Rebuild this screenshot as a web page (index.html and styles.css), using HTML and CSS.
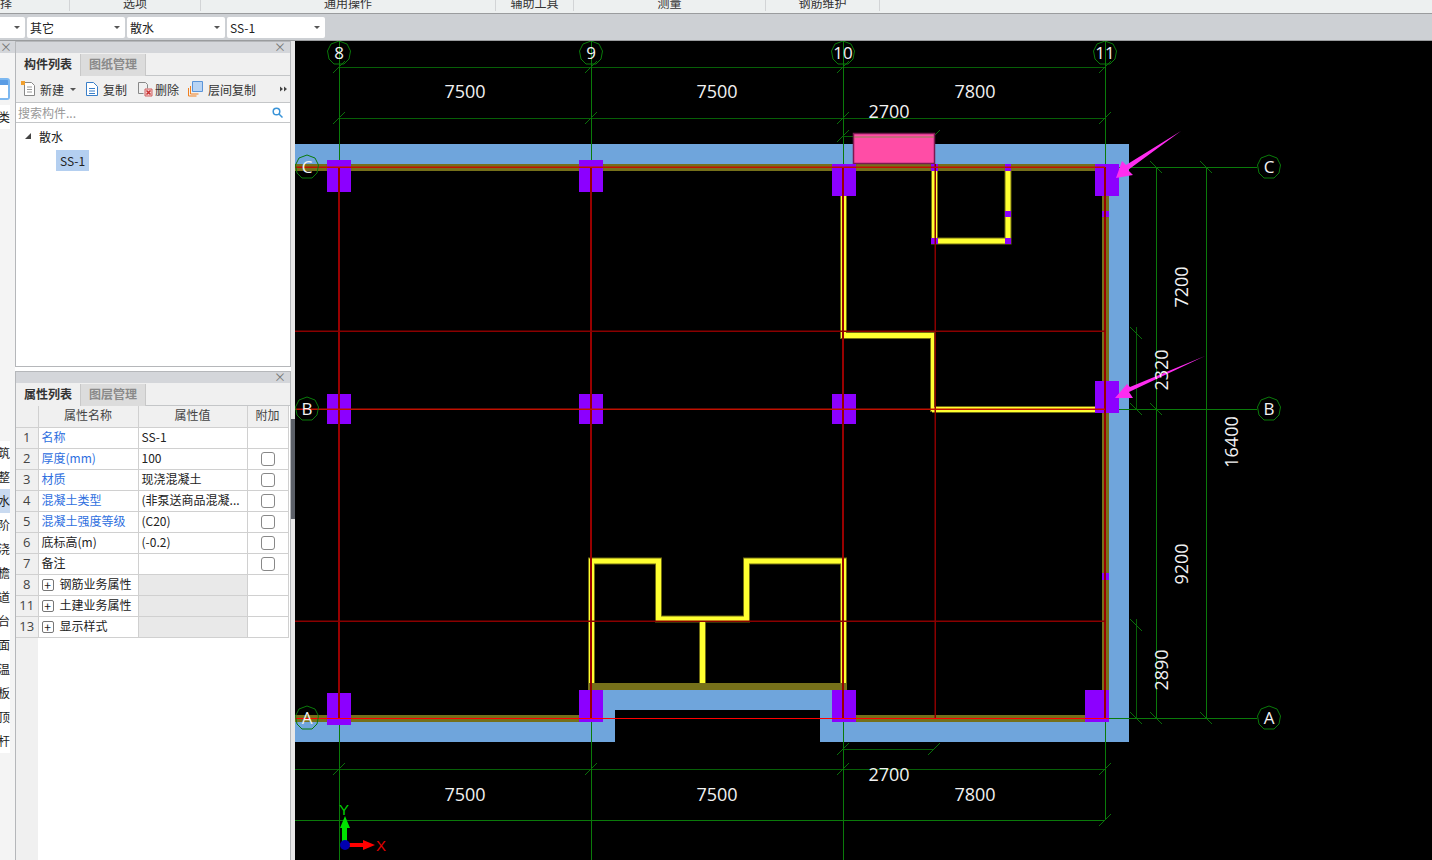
FILE: index.html
```html
<!DOCTYPE html>
<html lang="zh-CN">
<head>
    <meta charset="UTF-8">
    <title>散水</title>
    <link rel="stylesheet" href="styles.css">
</head>
<body>
    <div class="ribbon">
        <div class="rb_group rb_w70">择</div>
        <div class="rb_group rb_w131">选项</div>
        <div class="rb_group rb_w294">通用操作</div>
        <div class="rb_group rb_w78">辅助工具</div>
        <div class="rb_group rb_w192">测量</div>
        <div class="rb_group rb_w114">钢筋维护</div>
    </div>
    <div class="toolbar">
        <div class="combo combo_first"><span></span><i></i></div>
        <div class="combo"><span>其它</span><i></i></div>
        <div class="combo"><span>散水</span><i></i></div>
        <div class="combo"><span>SS-1</span><i></i></div>
    </div>

    <div class="main">
        <div class="nav">
            <div class="nav_top">×</div>
            <div class="nav_icon"></div>
            <div class="nav_item nav_first">类</div>
            <div class="nav_list">
                <div class="nav_item">建筑</div>
                <div class="nav_item">平整</div>
                <div class="nav_item nav_on">散水</div>
                <div class="nav_item">台阶</div>
                <div class="nav_item">后浇</div>
                <div class="nav_item">挑檐</div>
                <div class="nav_item">通道</div>
                <div class="nav_item">阳台</div>
                <div class="nav_item">屋面</div>
                <div class="nav_item">保温</div>
                <div class="nav_item">栏板</div>
                <div class="nav_item">压顶</div>
                <div class="nav_item">栏杆</div>
            </div>
        </div>

        <div class="side">
            <section class="panel panel_list">
                <div class="panel_title">×</div>
                <div class="tabs">
                    <div class="tab tab_on">构件列表</div>
                    <div class="tab">图纸管理</div>
                </div>
                <div class="actions">
                    <div class="act act_new">
                        <svg width="16" height="16" viewBox="0 0 16 16"><path class="ic_page" d="M3.500 1.500h7l3 3v10h-10z"/><path class="ic_line" d="M6 6h5M6 8.500h5M6 11h5"/><path class="ic_star" d="M0 0h4v4h-4z"/></svg>
                        <span>新建</span><i class="act_drop"></i>
                    </div>
                    <div class="act act_copy">
                        <svg width="14" height="16" viewBox="0 0 14 16"><path class="ic_blue" d="M1.500 1.500h7l4 4v9h-11z"/><path class="ic_blue" d="M4 7.500h6M4 10h6M4 12.500h6"/></svg>
                        <span>复制</span>
                    </div>
                    <div class="act act_del">
                        <svg width="16" height="16" viewBox="0 0 16 16"><path class="ic_grey" d="M1.500 1.500h7l2 2v4M1.500 1.500v11h5"/><path class="ic_del" d="M8 8h7v7h-7z"/><path class="ic_x" d="M9.500 9.500l4 4M13.500 9.500l-4 4"/></svg>
                        <span>删除</span>
                    </div>
                    <div class="act act_floor">
                        <svg width="15" height="16" viewBox="0 0 15 16"><path class="ic_orange" d="M.5 7v8h8M2.500 5v8h8"/><path class="ic_sheet" d="M4.500 .5h10v10h-10z"/></svg>
                        <span>层间复制</span>
                    </div>
                    <div class="act_more">
                        <svg width="7" height="7" viewBox="0 0 7 7"><path class="ic_more" d="M0 .5l3 2.500-3 2.500zM4 .5l3 2.500-3 2.500z"/></svg>
                    </div>
                </div>
                <div class="search">
                    <span>搜索构件...</span>
                    <svg width="11" height="11" viewBox="0 0 11 11"><circle class="ic_search" cx="4.500" cy="4.500" r="3.300"/><path class="ic_search" d="M7 7l3.500 3.500"/></svg>
                </div>
                <div class="tree">
                    <div class="tree_row"><i class="tree_arrow"></i><span>散水</span></div>
                    <div class="tree_leaf"><span>SS-1</span></div>
                </div>
            </section>

            <section class="panel panel_attr">
                <div class="panel_title">×</div>
                <div class="tabs">
                    <div class="tab tab_on">属性列表</div>
                    <div class="tab">图层管理</div>
                </div>
                <div class="attr_body">
                    <table class="attr">
                        <tr class="attr_head"><th class="col_no"></th><th class="col_name">属性名称</th><th class="col_val">属性值</th><th class="col_add">附加</th></tr>
                        <tr><td class="no">1</td><td class="blue">名称</td><td>SS-1</td><td></td></tr>
                        <tr><td class="no">2</td><td class="blue">厚度(mm)</td><td>100</td><td class="chk"><b></b></td></tr>
                        <tr><td class="no">3</td><td class="blue">材质</td><td>现浇混凝土</td><td class="chk"><b></b></td></tr>
                        <tr><td class="no">4</td><td class="blue">混凝土类型</td><td>(非泵送商品混凝...</td><td class="chk"><b></b></td></tr>
                        <tr><td class="no">5</td><td class="blue">混凝土强度等级</td><td>(C20)</td><td class="chk"><b></b></td></tr>
                        <tr><td class="no">6</td><td>底标高(m)</td><td>(-0.2)</td><td class="chk"><b></b></td></tr>
                        <tr><td class="no">7</td><td>备注</td><td></td><td class="chk"><b></b></td></tr>
                        <tr><td class="no">8</td><td class="grp"><em>+</em>钢筋业务属性</td><td class="grey"></td><td></td></tr>
                        <tr><td class="no">11</td><td class="grp"><em>+</em>土建业务属性</td><td class="grey"></td><td></td></tr>
                        <tr><td class="no">13</td><td class="grp"><em>+</em>显示样式</td><td class="grey"></td><td></td></tr>
                    </table>
                    <div class="attr_rest"></div>
                </div>
            </section>
        </div>

        <div class="splitter"><div class="split_thumb"></div></div>

        <svg class="cad" width="1137" height="819" viewBox="295 41 1137 819">
            <defs>
                <polygon id="axis_mark" class="axis_mark" points="0,-12 8,-9 11.500,-2 10,6 5,11 -5,11 -10,6 -11.500,-2 -8,-9"/>
            </defs>

            <!-- slab -->
            <path class="slab" d="M295 144H1129V742H820V710H832V722H1109V164H295Z"/>
            <path class="slab" d="M295 718H603V690H832V710H615V742H295Z"/>

            <!-- walls -->
            <path class="wall" d="M295 164H1109V171H295ZM1102 171H1109V722H1102ZM295 715H579V722H295ZM855 715H1102V722H855ZM588 683H847V690H588Z"/>

            <!-- axis lines -->
            <path class="grid_dim" d="M339 118.500H1105M295 769.500H1105M339 67.500H1105"/>
            <path class="grid_hi" d="M339.500 41V860M591.500 41V860M843.500 41V860M1105.500 41V820M295 820.500H1105M1105 167.500H1257M1105 409.500H1257M1105 718.500H1257M1156.500 167V718M1206.500 167V718"/>
            <path class="grid_dim" d="M843 136.500H934M843 749.500H934M1136.500 327V409M1136.500 619V718"/>
            <path class="ticks" d="M333 73l12-12M585 73l12-12M837 73l12-12M1099 73l12-12M333 124l12-12M585 124l12-12M837 124l12-12M1099 124l12-12M837 142l12-12M928 142l12-12M837 755l12-12M928 755l12-12M333 775l12-12M585 775l12-12M837 775l12-12M1099 775l12-12M1099 826l12-12M1150 161l12 12M1200 161l12 12M1130 327l12 12M1130 403l12 12M1150 403l12 12M1130 619l12 12M1130 712l12 12M1150 712l12 12M1200 712l12 12"/>

            <!-- yellow walls -->
            <path class="yl_edge" d="M843.500 196V335.500H934M932 409.500H1095M934.500 171V241H1008V171"/>
            <path class="yl_edge" d="M591.500 683V561H658.500V619H746.500V561H843.500V683M702.500 619V683"/>
            <path class="yl_thin_edge" d="M932.500 332V412"/>
            <path class="yl_fill" d="M843.500 196V335.500H934M932 409.500H1095M934.500 171V241H1008V171"/>
            <path class="yl_fill" d="M591.500 683V561H658.500V619H746.500V561H843.500V683M702.500 619V683"/>
            <path class="yl_thin" d="M932.500 333V411"/>

            <!-- opening -->
            <rect class="pink" x="853.500" y="133.500" width="81" height="30"/>
            <path class="pink_line" d="M854 137H934"/>

            <!-- columns -->
            <path class="col" d="M327 160h24v32h-24zM579 160h24v32h-24zM832 164h24v32h-24zM1095 164h24v32h-24zM327 394h24v30h-24zM579 394h24v30h-24zM832 394h24v30h-24zM1095 381h24v32h-24zM327 693h24v32h-24zM579 690h24v32h-24zM832 690h24v32h-24zM1085 690h24v32h-24z"/>
            <path class="col" d="M931 164h7v7h-7zM1005 164h6v7h-6zM1005 211h6v6h-6zM1005 238h6v6h-6zM931 238h7v6h-7zM1102 211h7v6h-7zM1102 573h7v7h-7z"/>

            <!-- red lines -->
            <path class="red_axis" d="M339 167V718M591 167V718M843 167V718M1105 167V718"/>
            <path class="red_dim" d="M295 331.250H1105M295 621.250H1105M935.250 164V718"/>
            <path class="red_wall" d="M295 167.250H1105M295 409.250H1105"/>
            <path class="red_hi" d="M295 718.500H1109"/>

            <!-- arrows -->
            <polygon class="arrow" points="1116,178 1122,161 1126,165 1181,131 1128,170 1133,175"/>
            <polygon class="arrow" points="1115,398 1127,384 1130,387 1205,356 1129,392 1133,398"/>

            <!-- axis marks -->
            <use href="#axis_mark" x="339" y="53"/>
            <use href="#axis_mark" x="591" y="53"/>
            <use href="#axis_mark" x="843" y="53"/>
            <use href="#axis_mark" x="1105" y="53"/>
            <use href="#axis_mark" x="307" y="167"/>
            <use href="#axis_mark" x="307" y="409"/>
            <use href="#axis_mark" x="307" y="718"/>
            <use href="#axis_mark" x="1269" y="167"/>
            <use href="#axis_mark" x="1269" y="409"/>
            <use href="#axis_mark" x="1269" y="718"/>
            <g class="t_axis">
                <text x="339" y="59">8</text>
                <text x="591" y="59">9</text>
                <text x="843" y="59">10</text>
                <text x="1105" y="59">11</text>
                <text x="307" y="173">C</text>
                <text x="307" y="415">B</text>
                <text x="307" y="724">A</text>
                <text x="1269" y="173">C</text>
                <text x="1269" y="415">B</text>
                <text x="1269" y="724">A</text>
            </g>

            <!-- dimensions -->
            <g class="t_dim">
                <text x="465" y="98">7500</text>
                <text x="717" y="98">7500</text>
                <text x="975" y="98">7800</text>
                <text x="889" y="118">2700</text>
                <text x="889" y="781">2700</text>
                <text x="465" y="801">7500</text>
                <text x="717" y="801">7500</text>
                <text x="975" y="801">7800</text>
                <text transform="translate(1188 287) rotate(-90)">7200</text>
                <text transform="translate(1168 370) rotate(-90)">2320</text>
                <text transform="translate(1238 442) rotate(-90)">16400</text>
                <text transform="translate(1188 564) rotate(-90)">9200</text>
                <text transform="translate(1168 670) rotate(-90)">2890</text>
            </g>

            <!-- ucs -->
            <path class="ucs_y" d="M342 845V828H340L345 816L350 828H347V845Z"/>
            <path class="ucs_x" d="M345 843H363V840L375 845L363 850V847H345Z"/>
            <circle class="ucs_o" cx="345" cy="845" r="5"/>
            <text class="t_y" x="344" y="815">Y</text>
            <text class="t_x" x="381" y="851">X</text>
        </svg>
    </div>
</body>
</html>
```

FILE: styles.css
```css
* {
    box-sizing: border-box;
    margin: 0;
    padding: 0;
}
body {
    width: 1432px;
    height: 860px;
    overflow: hidden;
    display: flex;
    flex-direction: column;
    background: #fff;
    color: #222;
    font-family: "Noto Sans CJK SC", "Liberation Sans", sans-serif;
    font-size: 12px;
}

/* top strip */
.ribbon {
    height: 14px;
    flex: none;
    display: flex;
    background: #edf0f0;
    border-bottom: 1px solid #9a9c9e;
    overflow: hidden;
}
.rb_group {
    height: 11px;
    line-height: 6px;
    text-align: center;
    border-right: 1px solid #d2d4d6;
    color: #333;
    overflow: hidden;
}
.rb_w70 { width: 70px; text-align: left; }
.rb_w131 { width: 131px; }
.rb_w294 { width: 295px; }
.rb_w78 { width: 78px; }
.rb_w192 { width: 192px; }
.rb_w114 { width: 114px; }

.toolbar {
    height: 27px;
    flex: none;
    display: flex;
    gap: 2px;
    padding: 3px 0 2px;
    background: #cdd0d4;
    border-bottom: 1px solid #9a9c9e;
}
.combo {
    width: 98px;
    height: 21px;
    display: flex;
    align-items: center;
    justify-content: space-between;
    padding: 0 5px 0 3px;
    background: #fff;
    border-radius: 2px;
}
.combo_first { width: 25px; border-radius: 0 2px 2px 0; }
.combo i {
    width: 0;
    height: 0;
    border: 3px solid transparent;
    border-top: 3px solid #555;
    border-bottom: 0;
}

/* main */
.main {
    flex: 1;
    display: flex;
    min-height: 0;
}
.nav {
    width: 15px;
    flex: none;
    background: #f4f4f4;
    overflow: hidden;
}
.nav_top {
    height: 12px;
    background: #d4d6da;
    color: #777;
    line-height: 12px;
}
.nav_icon {
    width: 10px;
    height: 22px;
    margin-top: 25px;
    border: 2px solid #7db8f0;
    border-left: 0;
    border-radius: 0 3px 3px 0;
    background: linear-gradient(#5a9ce4 30%, #fff 30%);
}
.nav_item {
    height: 24px;
    width: 10px;
    display: flex;
    justify-content: flex-end;
    line-height: 24px;
    white-space: nowrap;
    overflow: hidden;
    background: #fff;
}
.nav_first { margin-top: 5px; }
.nav_list { margin-top: 312px; }
.nav_on { background: #c9daf0; }

.side {
    width: 276px;
    flex: none;
    display: flex;
    flex-direction: column;
    gap: 4px;
}
.panel {
    border: 1px solid #b5b7ba;
    background: #fff;
}
.panel_list { height: 326px; flex: none; }
.panel_attr {
    flex: 1;
    min-height: 0;
    overflow: hidden;
    border-bottom: 0;
}
.panel_title {
    height: 11px;
    padding-right: 4px;
    background: #d4d6da;
    color: #777;
    line-height: 10px;
    text-align: right;
}
.tabs {
    height: 23px;
    display: flex;
    padding-top: 1px;
    background: #f0f0f0;
    border-bottom: 1px solid #c4c6c8;
}
.tab {
    width: 65px;
    height: 22px;
    background: #dcdcdc;
    color: #8a8a8a;
    font-weight: 700;
    line-height: 20px;
    text-align: center;
    border-right: 1px solid #c8c8c8;
}
.tab_on {
    background: #f0f0f0;
    color: #333;
}

.actions {
    height: 27px;
    display: flex;
    align-items: center;
    padding-left: 5px;
    background: #f0f0f0;
    border-bottom: 1px solid #c4c6c8;
}
.act {
    display: flex;
    align-items: center;
    color: #333;
}
.act_new { gap: 3px; margin-right: 9px; }
.act_copy { gap: 4px; margin-right: 10px; }
.act_del { gap: 2px; margin-right: 9px; }
.act_floor { gap: 5px; }
.act_drop {
    width: 0;
    height: 0;
    margin-left: 3px;
    border: 3px solid transparent;
    border-top: 3px solid #555;
    border-bottom: 0;
}
.act_more {
    margin-left: auto;
    margin-right: 3px;
    display: flex;
}
.ic_page { fill: #fff; stroke: #888; }
.ic_line { fill: none; stroke: #999; }
.ic_star { fill: #f0a030; }
.ic_blue { fill: #fff; stroke: #3a7fc8; }
.ic_grey { fill: none; stroke: #888; }
.ic_del { fill: #f4d0d0; stroke: #d06060; }
.ic_x { fill: none; stroke: #c83030; stroke-width: 1.500; }
.ic_orange { fill: none; stroke: #f08020; }
.ic_sheet { fill: #b8d4f4; stroke: #5a94d8; }
.ic_more { fill: #444; }
.ic_search { fill: none; stroke: #3a94d8; stroke-width: 1.500; }

.search {
    height: 20px;
    display: flex;
    align-items: center;
    justify-content: space-between;
    padding: 0 7px 0 2px;
    color: #999;
    border-bottom: 1px solid #c4c6c8;
}
.tree_row {
    height: 24px;
    margin: 1px 0 2px;
    display: flex;
    align-items: center;
    padding-left: 9px;
    gap: 8px;
    color: #222;
}
.tree_arrow {
    width: 0;
    height: 0;
    border-left: 6px solid transparent;
    border-bottom: 6px solid #444;
}
.tree_leaf { padding-left: 40px; }
.tree_leaf span {
    display: inline-block;
    width: 33px;
    height: 21px;
    background: #b4cff0;
    line-height: 21px;
    text-align: center;
}

.attr {
    width: 272px;
    table-layout: fixed;
    border-collapse: collapse;
    background: #fff;
}
.attr th, .attr td {
    height: 21px;
    border: 1px solid #d0d0d0;
    padding: 0 3px 2px;
    line-height: 16px;
    font-weight: 400;
    white-space: nowrap;
    overflow: hidden;
    border-top: 0;
    border-left: 0;
}
.attr_head th {
    background: #f0f0f0;
    color: #444;
    text-align: center;
}
.col_no { width: 22px; }
.col_name { width: 100px; }
.col_val { width: 109px; }
.col_add { width: 41px; }
.attr .no {
    background: #f0f0f0;
    color: #444;
    font-size: 13px;
    text-align: center;
    font-family: "Open Sans", sans-serif;
}
.attr .blue { color: #2e6fe0; }
.attr .grey { background: #e9e9e9; }
.attr .grp em {
    display: inline-block;
    width: 12px;
    height: 12px;
    margin-right: 6px;
    border: 1px solid #777;
    border-radius: 2px;
    font-style: normal;
    line-height: 9px;
    text-align: center;
    vertical-align: -1px;
}
.attr .chk {
    padding: 0;
    text-align: center;
    vertical-align: middle;
}
.chk b {
    display: block;
    width: 14px;
    height: 14px;
    margin: 0 auto;
    border: 1px solid #888;
    border-radius: 3px;
    background: #fff;
}
.attr_rest {
    width: 22px;
    height: 230px;
    background: #f0f0f0;
}

.splitter {
    width: 4px;
    flex: none;
    padding-top: 378px;
    background: #e8e8e8;
}
.split_thumb {
    width: 4px;
    height: 100px;
    background: #5c6068;
}

/* drawing */
.cad {
    flex: none;
    display: block;
    background: #000;
}
.slab { fill: #6fa5dc; }
.wall { fill: #76701a; }
.grid_hi { fill: none; stroke: #0a7a0a; stroke-width: 1; shape-rendering: crispEdges; }
.grid_dim { fill: none; stroke: #075f07; stroke-width: 1; shape-rendering: crispEdges; }
.ticks { fill: none; stroke: #0a6f0a; stroke-width: 1; }
.yl_edge { fill: none; stroke: #706c10; stroke-width: 7; }
.yl_fill { fill: none; stroke: #ffff30; stroke-width: 5; }
.yl_thin_edge { fill: none; stroke: #706c10; stroke-width: 5; }
.yl_thin { fill: none; stroke: #ffff30; stroke-width: 3; }
.pink { fill: #ff4da6; stroke: #7a1a50; stroke-width: 1.500; }
.pink_line { stroke: #8a8a50; stroke-width: 1; }
.col { fill: #8c00ff; }
.red_axis { fill: none; stroke: #980000; stroke-width: 2; shape-rendering: crispEdges; }
.red_dim { fill: none; stroke: #8a0000; stroke-width: 1.500; }
.red_wall { fill: none; stroke: #c01000; stroke-width: 1.500; }
.red_hi { fill: none; stroke: #ff0000; stroke-width: 1.500; shape-rendering: crispEdges; }
.arrow { fill: #ff2cf0; }
.axis_mark { fill: none; stroke: #0a7a0a; stroke-width: 1; }
.t_axis text, .t_dim text {
    fill: #f2f2f2;
    font-family: "Open Sans", sans-serif;
    text-anchor: middle;
}
.t_axis text { font-size: 17px; }
.t_dim text { font-size: 18px; }
.ucs_y { fill: #00e000; }
.ucs_x { fill: #ff0000; }
.ucs_o { fill: #0000b0; }
.t_y, .t_x {
    font-family: "Liberation Sans", sans-serif;
    font-size: 15px;
    text-anchor: middle;
}
.t_y { fill: #00d000; }
.t_x { fill: #e00000; }
```
